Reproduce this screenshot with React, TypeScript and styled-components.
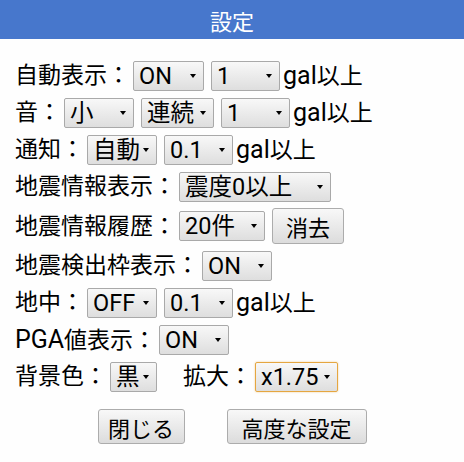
import React from 'react';
import styled, { createGlobalStyle } from 'styled-components';

const GlobalStyle = createGlobalStyle`
    html, body {
        margin: 0;
        padding: 0;
        background: #fefefe;
    }
    body {
        font-family: Roboto, "Noto Sans CJK JP", sans-serif;
        color: #000;
    }
`;

const Header = styled.header`
    height: 39px;
    background: #4777cc;
    color: #fff;
    display: flex;
    align-items: center;
    justify-content: center;
    font-family: "Noto Sans CJK JP", sans-serif;
    font-size: 22px;
`;

const Body = styled.div`
    padding: 18px 0 0 15px;
`;

const Row = styled.div`
    display: flex;
    align-items: center;
    gap: 3px;
    min-height: 37px;
`;

const Label = styled.span<{ $indent?: number }>`
    font-size: 23px;
    line-height: 1;
    white-space: nowrap;
    margin-left: ${(p) => p.$indent ?? 0}px;
`;

// latin letters sit a bit larger than the kana/kanji next to them
const Latin = styled.span`
    font-size: 25px;
`;

const SelectWrap = styled.span<{ $w: number }>`
    position: relative;
    display: inline-flex;
    flex: none;
    width: ${(p) => p.$w}px;
    height: 30px;

    & + & {
        margin-left: 4px;
    }

    &::after {
        // the little menu arrow
        content: '';
        position: absolute;
        right: 8px;
        top: 50%;
        margin-top: -2px;
        border-left: 3px solid transparent;
        border-right: 3px solid transparent;
        border-top: 4px solid #000;
        pointer-events: none;
    }
`;

const Picker = styled.select<{ $focus?: boolean }>`
    appearance: none;
    -webkit-appearance: none;
    box-sizing: border-box;
    width: 100%;
    height: 100%;
    margin: 0;
    padding: 0 14px 0 5px;
    font-family: inherit;
    font-size: 23.5px;
    color: #000;
    border: 1px solid ${(p) => (p.$focus ? '#e5a640' : '#a9a9a9')};
    border-radius: 2px;
    background: linear-gradient(#f8f8f8, #dedede);
    box-shadow: ${(p) => (p.$focus ? '0 0 2px rgba(229, 166, 64, 0.6)' : 'none')};
    outline: none;
`;

const Button = styled.button<{ $w: number; $h: number }>`
    box-sizing: border-box;
    flex: none;
    width: ${(p) => p.$w}px;
    height: ${(p) => p.$h}px;
    padding: 0;
    font-family: "Noto Sans CJK JP", sans-serif;
    font-size: 22px;
    color: #000;
    border: 1px solid #acacac;
    border-radius: 3px;
    background: linear-gradient(#f8f8f8, #dcdcdc);
    margin: 3px 0;

    ${SelectWrap} + & {
        margin-left: 4px;
    }
`;

const Footer = styled.div`
    display: flex;
    justify-content: center;
    gap: 42px;
    margin-top: 11px;
    padding-right: 15px;
`;

type SelectProps = {
    width: number;
    value: string;
    options: string[];
    focus?: boolean;
};
const Select = (props: SelectProps) => {
    const { width, value, options, focus } = props;
    return (
        <SelectWrap $w={width}>
            <Picker $focus={focus} defaultValue={value}>
                {options.map((o) => (
                    <option key={o} value={o}>
                        {o}
                    </option>
                ))}
            </Picker>
        </SelectWrap>
    );
};

const GalLabel = () => (
    <Label>
        <Latin>gal</Latin>以上
    </Label>
);

const onOff = ['ON', 'OFF'];
const gals = ['0.1', '0.5', '1', '2', '5', '10'];

const App = () => {
    return (
        <>
            <GlobalStyle />
            <Header>設定</Header>
            <Body>
                <Row>
                    <Label>自動表示：</Label>
                    <Select width={71} value="ON" options={onOff} />
                    <Select width={69} value="1" options={gals} />
                    <GalLabel />
                </Row>
                <Row>
                    <Label>音：</Label>
                    <Select width={70} value="小" options={['大', '中', '小', 'なし']} />
                    <Select width={73} value="連続" options={['連続', '一回']} />
                    <Select width={69} value="1" options={gals} />
                    <GalLabel />
                </Row>
                <Row>
                    <Label>通知：</Label>
                    <Select width={70} value="自動" options={['自動', 'ON', 'OFF']} />
                    <Select width={69} value="0.1" options={gals} />
                    <GalLabel />
                </Row>
                <Row>
                    <Label>地震情報表示：</Label>
                    <Select width={152} value="震度0以上" options={['震度0以上', '震度1以上', '震度3以上']} />
                </Row>
                <Row>
                    <Label>地震情報履歴：</Label>
                    <Select width={86} value="20件" options={['10件', '20件', '50件']} />
                    <Button $w={72} $h={36}>
                        消去
                    </Button>
                </Row>
                <Row>
                    <Label>地震検出枠表示：</Label>
                    <Select width={70} value="ON" options={onOff} />
                </Row>
                <Row>
                    <Label>地中：</Label>
                    <Select width={70} value="OFF" options={onOff} />
                    <Select width={69} value="0.1" options={gals} />
                    <GalLabel />
                </Row>
                <Row>
                    <Label>
                        <Latin>PGA</Latin>値表示：
                    </Label>
                    <Select width={70} value="ON" options={onOff} />
                </Row>
                <Row>
                    <Label>背景色：</Label>
                    <Select width={47} value="黒" options={['黒', '白']} />
                    <Label $indent={23}>拡大：</Label>
                    <Select width={83} value="x1.75" options={['x1', 'x1.25', 'x1.5', 'x1.75', 'x2']} focus />
                </Row>
                <Footer>
                    <Button $w={87} $h={35}>
                        閉じる
                    </Button>
                    <Button $w={140} $h={35}>
                        高度な設定
                    </Button>
                </Footer>
            </Body>
        </>
    );
};

export default App;
